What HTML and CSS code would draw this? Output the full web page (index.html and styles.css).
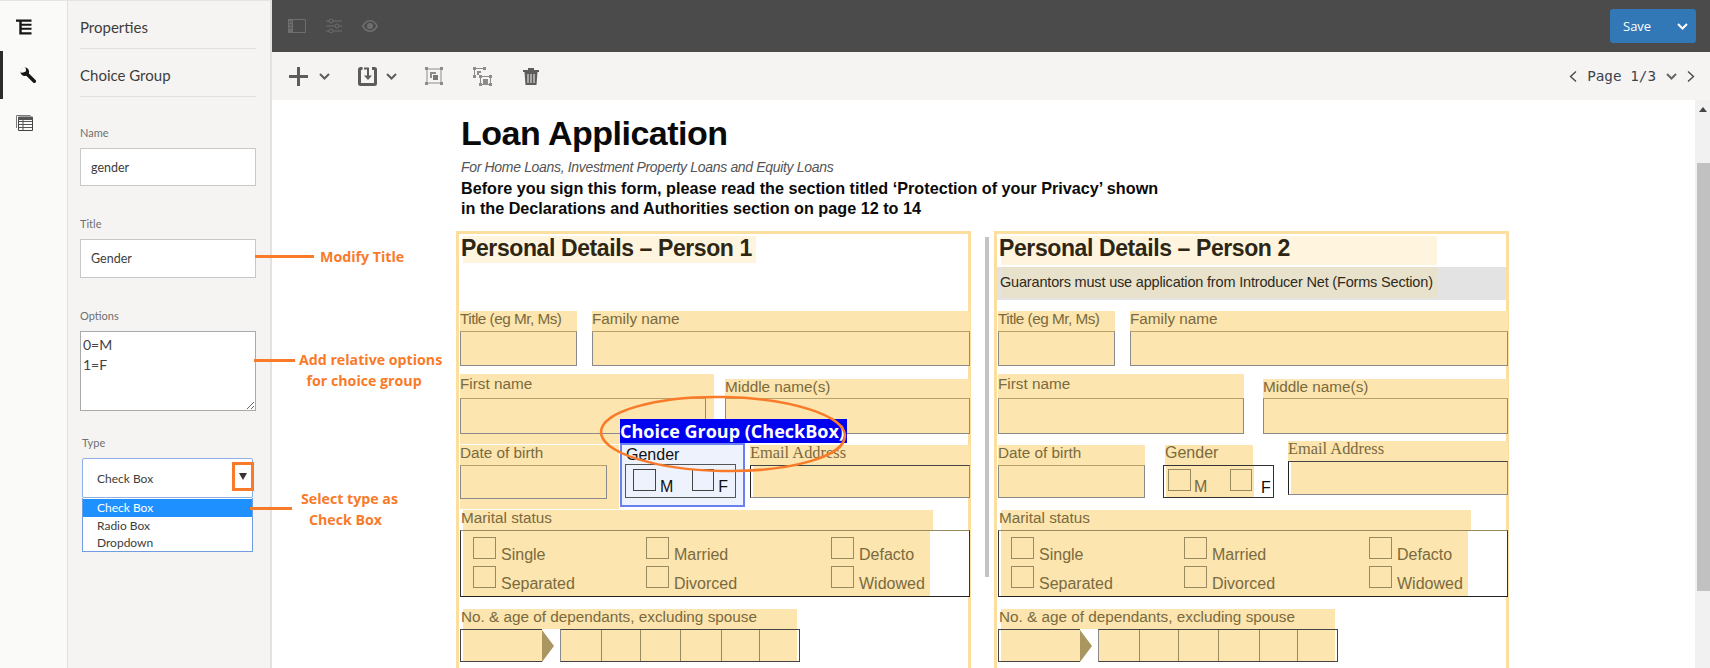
FILE: index.html
```html
<!DOCTYPE html>
<html lang="en">
<head>
<meta charset="utf-8">
<title>Choice Group</title>
<link rel="stylesheet" href="styles.css">
</head>
<body>
<div class="app">
  <nav class="rail">
    <div class="rail-item">
      <svg width="16" height="16" viewBox="0 0 16 16"><path d="M0 .5h15.500v2.200H0zM3.300 .5h2.400v15H3.300zM5.700 4.700h9.800v2H5.700zM5.700 8.800h9.800v2H5.700zM3.300 13.200h12.200v2.200H3.300z" fill="#161616"/></svg>
    </div>
    <div class="rail-item rail-active rail-wrench">
      <svg width="16" height="16" viewBox="0 0 16 16"><path d="M6 6l8.300 8.200" stroke="#161616" stroke-width="3.400" stroke-linecap="round"/><circle cx="4.800" cy="4.800" r="4.300" fill="#161616"/><path d="M-.5 3.800 3.800-.5 6 1.800 5.800 4.500 3.200 5.600 1.400 5.800z" fill="#fafaf9"/></svg>
    </div>
    <div class="rail-item">
      <svg width="17" height="16" viewBox="0 0 17 16"><path d="M.5 13V.5h14" fill="none" stroke="#777"/><path d="M2.500 2.500h14v13h-14z" fill="none" stroke="#444"/><path d="M2.500 2h14v2.500h-14zM3 6.500h13M3 9.500h13M3 12.500h13M7 5v10" fill="#555" stroke="#555"/></svg>
    </div>
  </nav>

  <aside class="panel">
    <div class="panel-head">Properties</div>
    <div class="panel-head">Choice Group</div>
    <div class="prop-form">
      <label class="prop-label">Name</label>
      <div class="input">gender</div>
      <label class="prop-label">Title</label>
      <div class="input input-tall">Gender</div>
      <label class="prop-label">Options</label>
      <div class="textarea">0=M<br>1=F
        <svg class="grip" width="9" height="9" viewBox="0 0 9 9"><path d="M1 8 8 1M5 8 8 5" stroke="#666" fill="none"/></svg>
      </div>
      <label class="prop-label prop-label-type">Type</label>
      <div class="select">
        <div class="select-value">Check Box</div>
        <ul class="select-list">
          <li class="select-on">Check Box</li>
          <li>Radio Box</li>
          <li>Dropdown</li>
        </ul>
      </div>
    </div>
  </aside>

  <main class="main">
    <header class="topbar">
      <div class="icons">
        <svg width="18" height="14" viewBox="0 0 18 14"><path d="M.5.5h17v13H.5z" fill="none" stroke="#6e6e6e"/><path d="M0 0h5v14H0z" fill="#6e6e6e"/><path d="M1 3h3M1 6h3M1 9h3" stroke="#4b4b4b"/></svg>
        <svg width="16" height="14" viewBox="0 0 16 14"><g fill="none" stroke="#6e6e6e"><path d="M0 2h3M7 2h9M0 7h9M13 7h3M0 12h3M7 12h9"/><circle cx="5" cy="2" r="2"/><circle cx="11" cy="7" r="2"/><circle cx="5" cy="12" r="2"/></g></svg>
        <svg width="16" height="12" viewBox="0 0 16 12"><path d="M.8 6C3 2 5.500 .8 8 .8S13 2 15.200 6C13 10 10.500 11.200 8 11.200S3 10 .8 6z" fill="none" stroke="#6e6e6e" stroke-width="1.600"/><circle cx="8" cy="6" r="3" fill="#6e6e6e"/></svg>
      </div>
      <div class="save"><span>Save</span>
        <svg width="11" height="7" viewBox="0 0 11 7"><path d="M1 1l4.500 4.500L10 1" fill="none" stroke="#fff" stroke-width="2"/></svg>
      </div>
    </header>

    <div class="toolbar">
      <div class="tools">
        <span class="tool tool-add">
          <svg width="19" height="19" viewBox="0 0 19 19"><path d="M8 0h3v19H8zM0 8h19v3H0z" fill="#5c5c5c"/></svg>
          <svg width="11" height="7" viewBox="0 0 11 7"><path d="M1 1l4.500 4.500L10 1" fill="none" stroke="#5c5c5c" stroke-width="2"/></svg>
        </span>
        <span class="tool tool-save">
          <svg width="19" height="19" viewBox="0 0 19 19"><path d="M4.500 1.500H2.500a1 1 0 0 0-1 1v14a1 1 0 0 0 1 1h14a1 1 0 0 0 1-1v-14a1 1 0 0 0-1-1H14" fill="none" stroke="#5c5c5c" stroke-width="3"/><path d="M6 1.500h4v7.500" fill="none" stroke="#5c5c5c" stroke-width="2"/><path d="M6 8.500h8l-4 4.500z" fill="#5c5c5c"/></svg>
          <svg width="11" height="7" viewBox="0 0 11 7"><path d="M1 1l4.500 4.500L10 1" fill="none" stroke="#5c5c5c" stroke-width="2"/></svg>
        </span>
        <span class="tool tool-group">
          <svg width="18" height="18" viewBox="0 0 18 18"><path d="M2 2h14v14H2z" fill="none" stroke="#8c8c8c"/><path d="M0 0h3v3H0zM15 0h3v3h-3zM0 15h3v3H0zM15 15h3v3h-3z" fill="#8c8c8c"/><path d="M5 5h6v2H7v4H5z" fill="#8c8c8c"/><path d="M8 8h5v5H8z" fill="#777"/></svg>
        </span>
        <span class="tool tool-ungroup">
          <svg width="19" height="19" viewBox="0 0 19 19"><path d="M1.500 1.500h10M1.500 1.500v8M7.500 9.500h10v8h-10z" fill="none" stroke="#8c8c8c"/><path d="M0 0h3v3H0zM10 0h3v3h-3zM0 8h3v3H0zM6 8h3v3H6zM16 8h3v3h-3zM6 16h3v3H6zM16 16h3v3h-3z" fill="#8c8c8c"/><path d="M10 12h5v5h-5z" fill="#8c8c8c"/><path d="M4 4h4v2H6v2H4z" fill="#8c8c8c"/></svg>
        </span>
        <span class="tool tool-trash">
          <svg width="16" height="18" viewBox="0 0 16 18"><path d="M0 3h16v2H0zM5 1h6v2H5z" fill="#5c5c5c"/><path d="M1.500 5h13l-1 13h-11z" fill="#5c5c5c"/><path d="M5 7v9M8 7v9M11 7v9" stroke="#f5f4f2"/></svg>
        </span>
      </div>
      <div class="pager">
        <svg width="8" height="11" viewBox="0 0 8 11"><path d="M7 .5 1.500 5.500 7 10.500" fill="none" stroke="#444" stroke-width="1.300"/></svg>
        <span class="pager-text">Page 1/3</span>
        <svg width="11" height="7" viewBox="0 0 11 7"><path d="M1 1l4.500 4.500L10 1" fill="none" stroke="#666" stroke-width="2"/></svg>
        <svg width="8" height="11" viewBox="0 0 8 11"><path d="M1 .5 6.500 5.500 1 10.500" fill="none" stroke="#444" stroke-width="1.300"/></svg>
      </div>
    </div>

    <section class="canvas">
      <div class="doc">
        <h1 class="doc-title">Loan Application</h1>
        <p class="doc-sub">For Home Loans, Investment Property Loans and Equity Loans</p>
        <p class="doc-note">Before you sign this form, please read the section titled ‘Protection of your Privacy’ shown<br>in the Declarations and Authorities section on page 12 to 14</p>

        <div class="sheets">
          <div class="sheet">
            <div class="sheet-head"><h2 class="sheet-title sheet-title-1">Personal Details – Person 1</h2></div>
            <div class="sheet-strip"></div>
            <div class="row row-a">
              <div class="fld w-title"><span class="lab lab-title">Title (eg Mr, Ms)</span><div class="box box-a"></div></div>
              <div class="fld w-family"><span class="lab">Family name</span><div class="box box-a"></div></div>
            </div>
            <div class="row row-b row-b1">
              <div class="fld w-first w-first-1"><span class="lab lab-first">First name</span><div class="box box-b"></div></div>
              <div class="fld w-middle"><span class="lab lab-middle">Middle name(s)</span><div class="box box-b"></div></div>
            </div>
            <div class="row row-c">
              <div class="fld w-dob w-dob-1"><span class="lab lab-dob">Date of birth</span><div class="box box-c"></div></div>
              <div class="gender-slot"></div>
              <div class="fld w-email"><span class="lab lab-serif">Email Address</span><div class="box box-c"></div></div>
            </div>
            <div class="row-marital">
              <span class="lab lab-marital">Marital status</span>
              <div class="marital">
                <div class="opt"><i class="cb"></i>Single</div>
                <div class="opt"><i class="cb"></i>Married</div>
                <div class="opt"><i class="cb"></i>Defacto</div>
                <div class="opt"><i class="cb"></i>Separated</div>
                <div class="opt"><i class="cb"></i>Divorced</div>
                <div class="opt"><i class="cb"></i>Widowed</div>
              </div>
            </div>
            <div class="row-dep">
              <span class="lab lab-dep">No. &amp; age of dependants, excluding spouse</span>
              <div class="dep">
                <div class="dep-num"></div><div class="dep-arrow"></div>
                <div class="dep-cells"><i></i><i></i><i></i><i></i><i></i><i></i></div>
              </div>
            </div>
          </div>

          <div class="rule"></div>

          <div class="sheet">
            <div class="sheet-head"><h2 class="sheet-title sheet-title-2">Personal Details – Person 2</h2></div>
            <div class="sheet-strip sheet-strip-on"><span>Guarantors must use application from Introducer Net (Forms Section)</span></div>
            <div class="row row-a">
              <div class="fld w-title"><span class="lab lab-title">Title (eg Mr, Ms)</span><div class="box box-a"></div></div>
              <div class="fld w-family"><span class="lab">Family name</span><div class="box box-a"></div></div>
            </div>
            <div class="row row-b">
              <div class="fld w-first"><span class="lab lab-first">First name</span><div class="box box-b"></div></div>
              <div class="fld w-middle"><span class="lab lab-middle">Middle name(s)</span><div class="box box-b"></div></div>
            </div>
            <div class="row row-c">
              <div class="fld w-dob"><span class="lab lab-dob">Date of birth</span><div class="box box-c"></div></div>
              <div class="fld w-gender"><span class="lab lab-gender">Gender</span>
                <div class="gbox"><div class="gbox-fill"><i class="cb"></i>M<i class="cb cb-2"></i></div><span class="gbox-f">F</span></div>
              </div>
              <div class="fld w-email w-email2"><span class="lab lab-serif">Email Address</span><div class="box box-c"></div></div>
            </div>
            <div class="row-marital">
              <span class="lab lab-marital">Marital status</span>
              <div class="marital">
                <div class="opt"><i class="cb"></i>Single</div>
                <div class="opt"><i class="cb"></i>Married</div>
                <div class="opt"><i class="cb"></i>Defacto</div>
                <div class="opt"><i class="cb"></i>Separated</div>
                <div class="opt"><i class="cb"></i>Divorced</div>
                <div class="opt"><i class="cb"></i>Widowed</div>
              </div>
            </div>
            <div class="row-dep">
              <span class="lab lab-dep">No. &amp; age of dependants, excluding spouse</span>
              <div class="dep">
                <div class="dep-num"></div><div class="dep-arrow"></div>
                <div class="dep-cells"><i></i><i></i><i></i><i></i><i></i><i></i></div>
              </div>
            </div>
          </div>
        </div>
      </div>
      <div class="scrollbar"><span class="scroll-up"></span><span class="scroll-thumb"></span></div>
    </section>
  </main>

  <!-- selected widget on the form -->
  <div class="choice">
    <div class="choice-tag">Choice Group (CheckBox)</div>
    <div class="choice-body">
      <div class="choice-label">Gender</div>
      <div class="choice-box"><i class="cb cb-k"></i>M<i class="cb cb-k cb-3"></i>F</div>
    </div>
  </div>

  <!-- annotations -->
  <div class="arrow-box"><span class="tri"></span></div>
  <span class="line l1"></span><span class="note n1">Modify Title</span>
  <span class="line l2"></span><span class="note n2">Add relative options<br><span class="note-off-a">for choice group</span></span>
  <span class="line l3"></span><span class="note n3">Select type as<br><span class="note-off-b">Check Box</span></span>
  <svg class="ellipse" width="252" height="82" viewBox="0 0 252 82"><ellipse cx="126" cy="41" rx="122" ry="37" transform="rotate(1 126 41)" fill="none" stroke="#f97b2a" stroke-width="2.500"/></svg>
</div>
</body>
</html>
```
FILE: styles.css
```css
* { box-sizing: border-box; }
html, body { margin: 0; padding: 0; height: 100%; overflow: hidden; }
body { font-family: "Lato", "Liberation Sans", sans-serif; color: #2c2c2c; background: #fff; }
.app { position: relative; display: flex; width: 1710px; height: 668px; overflow: hidden; }

/* rail */
.rail { width: 68px; flex: none; background: #fafaf9; border-right: 1px solid #dfdfdf; border-top: 1px solid #e4e4e4; padding-top: 2px; }
.rail-item { height: 48px; display: flex; align-items: center; padding-left: 16px; }
.rail-wrench { padding-left: 20px; }
.rail-active { box-shadow: inset 3px 0 0 #2c2c2c; }

/* properties panel */
.panel { width: 204px; flex: none; background: #f5f4f2; border-right: 2px solid #e2e2e2; border-top: 1px solid #e4e4e4; padding: 0 14px 0 12px; }
.panel-head { height: 48px; line-height: 52px; border-bottom: 1px solid #e0e0e0; font-size: 15px; color: #3d3d3d; white-space: nowrap; }
.prop-form { padding-top: 27px; }
.prop-label { display: block; font-size: 11px; line-height: 18px; height: 24px; color: #707070; }
.prop-label-type { margin-left: 2px; }
.input { height: 38px; margin-bottom: 29px; background: #fff; border: 1px solid #c8c8c8; padding-left: 10px; font-size: 12.500px; line-height: 37px; color: #3d3d3d; }
.input-tall { height: 39px; }
.textarea { position: relative; height: 80px; margin-bottom: 23px; background: #fff; border: 1px solid #aaa; padding: 3px 0 0 2px; font-size: 14px; line-height: 20px; color: #444; }
.grip { position: absolute; right: 0; bottom: 0; }
.select { margin: 0 3px 0 2px; }
.select-value { height: 40px; background: #fff; border: 1px solid #8fb0e6; border-radius: 2px; padding-left: 14px; font-size: 12px; line-height: 40px; color: #3d3d3d; }
.select-list { list-style: none; margin: 0; padding: 1px 0 0; border: 1px solid #6f9de0; border-top: 0; background: #fff; font-size: 12px; color: #3d3d3d; }
.select-list li { height: 17px; line-height: 17px; padding-left: 14px; }
.select-list .select-on { height: 18px; background: #1e90ff; color: #fff; }

/* main */
.main { flex: 1; min-width: 0; display: flex; flex-direction: column; }
.topbar { height: 52px; flex: none; background: #4b4b4b; display: flex; align-items: center; justify-content: space-between; padding: 0 14px 0 16px; }
.icons { display: flex; align-items: center; gap: 20px; }
.save { width: 86px; height: 34px; background: #3277b6; border-radius: 3px; color: #fff; font-size: 13px; display: flex; align-items: center; justify-content: space-between; padding: 0 8px 0 13px; font-family: "Open Sans", sans-serif; }
.toolbar { height: 48px; flex: none; background: #f5f4f2; display: flex; align-items: center; justify-content: space-between; padding: 0 15px 0 17px; }
.tools { display: flex; align-items: center; }
.tool { display: flex; align-items: center; }
.tool-add { gap: 11px; }
.tool-save { gap: 9px; margin-left: 28px; }
.tool-group { margin-left: 28px; }
.tool-ungroup { margin-left: 30px; }
.tool-trash { margin-left: 31px; }
.pager { display: flex; align-items: center; gap: 10px; font-family: "DejaVu Sans Mono", monospace; font-size: 14.300px; color: #3d4450; }

/* canvas */
.canvas { flex: 1; min-height: 0; display: flex; background: #fff; overflow: hidden; }
.doc { flex: 1; min-width: 0; padding: 13px 0 0 184px; font-family: "Liberation Sans", Arial, sans-serif; }
.doc-title { margin: 0 0 0 5px; font-size: 34px; line-height: 40px; font-weight: 700; color: #0a0a0a; letter-spacing: -.5px; }
.doc-sub { margin: 5px 0 0 5px; font-size: 14px; line-height: 18px; font-style: italic; color: #555; letter-spacing: -.33px; }
.doc-note { margin: 2px 0 0 5px; font-size: 16.200px; line-height: 20px; font-weight: 700; color: #0a0a0a; }
.sheets { display: flex; margin-top: 13px; }
.rule { width: 4px; margin: 6px 5px 0 14px; background: #c4c4c4; flex: none; height: 340px; }
.sheet { width: 515px; flex: none; border: 3px solid #fcdf9e; border-bottom: 0; height: 440px; }

.sheet-head { height: 31px; }
.sheet-title { margin: 2px 0 0 4px; font-size: 23px; letter-spacing: -.4px; line-height: 24px; height: 27px; font-weight: 700; color: #2e2614; background: #fff5df; white-space: nowrap; text-indent: -2px; }
.sheet-title-1 { width: 293px; }
.sheet-title-2 { width: 436px; height: 29px; }
.sheet-strip { height: 44px; }
.sheet-strip-on { background: #e3e3e3; height: 33px; margin-bottom: 11px; font-size: 14.500px; line-height: 31px; letter-spacing: -.18px; color: #2e2a1c; white-space: nowrap; }
.sheet-strip-on span { display: block; width: 436px; margin-left: 4px; height: 31px; background: #e8e2cd; text-indent: -1px; }

.row { display: flex; width: 510px; }
.fld { display: flex; flex-direction: column; flex: none; }
.lab { display: block; background: #fce5ae; color: #7a6a3f; font-size: 15.300px; line-height: 15px; height: 20px; white-space: nowrap; }
.lab-serif { font-family: "Liberation Serif", serif; font-size: 16.400px; }
.box { border: 1px solid #333; border-color: #b9a26a #8a8a8a #8a8a8a #8a8a8a; background: #fce5ae; }
.row-a { margin-left: 1px; gap: 15px; }
.lab-title { letter-spacing: -.5px; }
.w-title { width: 117px; }
.w-family { width: 378px; }
.box-a { height: 35px; }
.row-b { margin-left: 1px; margin-top: 8px; gap: 19px; height: 60px; }
.row-b1 { gap: 11px; }
.w-first { width: 246px; }
.w-first-1 { width: 254px; height: 70px; background: #fce5ae; }
.w-first-1 .box-b { width: 246px; }
.w-middle { width: 245px; }
.lab-first { height: 24px; line-height: 19px; }
.lab-middle { margin-top: 5px; height: 19px; line-height: 16px; }
.box-b { height: 36px; }
.row-c { margin-left: 1px; margin-top: 11px; height: 53px; }
.w-dob { width: 147px; }
.w-dob-1 { width: 159px; height: 64px; background: #fce5ae; }
.w-dob-1 .box-c { width: 147px; }
.box-c { height: 34px; }
.lab-dob { height: 20px; line-height: 15px; }
.gender-slot { width: 131px; flex: none; }
.w-email { width: 220px; }
.w-email .lab { height: 20px; line-height: 15px; }
.w-email .box-c { border-left-color: #222; border-top-color: #444; background: linear-gradient(90deg, #fff 2px, #fce5ae 2px); }
.w-gender { width: 111px; margin-left: 18px; }
.lab-gender { width: 88px; height: 20px; margin-left: 2px; font-size: 16px; }
.w-email2 { margin-left: 14px; margin-top: -4px; }

.gbox { height: 34px; border: 1px solid #333; background: #fff; display: flex; font-size: 16px; }
.gbox-fill { width: 88px; margin-left: 2px; background: #fce5ae; color: #7a6a3f; display: flex; align-items: flex-end; padding: 0 0 1px 2px; flex: none; }
.gbox-f { color: #111; align-self: flex-end; padding: 0 0 0 7px; font-family: "Liberation Sans", sans-serif; font-size: 16px; }

.cb { display: inline-block; width: 23px; height: 22px; border: 1px solid #9a8a60; margin-right: 3px; margin-bottom: 5px; flex: none; }
.cb-2 { margin-left: 23px; margin-right: 0; width: 22px; }
.cb-3 { margin-left: 19px; width: 22px; }
.cb-k { border-color: #444; }

.row-marital { margin: 12px 0 0 1px; width: 510px; }
.lab-marital { width: 470px; margin-left: 3px; height: 20px; text-indent: -2px; }
.marital { display: grid; grid-template-columns: 173px 185px 1fr; grid-auto-rows: 29px; width: 510px; height: 67px; border: 1px solid #333; border-color: #9a8a60 #333 #222 #333; padding: 6px 0 0 12px; background: linear-gradient(90deg, #fff 2px, #fce5ae 2px, #fce5ae 469px, #fff 469px); font-size: 16px; color: #7a6a3f; }
.opt { display: flex; align-items: flex-end; line-height: 22px; }
.opt .cb { margin-right: 5px; margin-bottom: 5px; align-self: flex-start; }

.row-dep { margin: 12px 0 0 1px; }
.lab-dep { width: 334px; margin-left: 3px; height: 20px; text-indent: -2px; }
.dep { display: flex; align-items: stretch; height: 33px; }
.dep-num { width: 82px; border: 1px solid #444; border-right: 0; background: linear-gradient(90deg, #fff 2px, #fce5ae 2px); }
.dep-arrow { width: 0; height: 0; align-self: center; border-left: 12px solid #a99660; border-top: 16px solid transparent; border-bottom: 16px solid transparent; }
.dep-cells { display: grid; grid-template-columns: 40px 39px 40px 41px 38px 42px; margin-left: 6px; width: 240px; border: 1px solid #444; border-left-color: #8a8a8a; background: linear-gradient(90deg, #fce5ae 236px, #fff 236px); }
.dep-cells i { border-left: 1px solid #9a8a60; }
.dep-cells i:first-child { border-left: 0; }

.scrollbar { width: 15px; flex: none; background: #f1f1f1; position: relative; }
.scroll-up { position: absolute; top: 7px; left: 4px; border: 4px solid transparent; border-top: 0; border-bottom: 5px solid #444; }
.scroll-thumb { position: absolute; top: 63px; left: 2px; right: 0; height: 428px; background: #c1c1c1; }

/* selected choice-group widget (sits on top of the form) */
.choice { position: absolute; left: 620px; top: 419px; width: 227px; font-family: "Liberation Sans", sans-serif; }
.choice-tag { height: 24px; background: #0000f0; color: #fff; font-family: "Open Sans", sans-serif; font-weight: 700; font-size: 18px; line-height: 24px; white-space: nowrap; overflow: hidden; }
.choice-body { width: 125px; height: 64px; background: #eef2fc; border: 2px solid #6a7ff0; padding: 0 0 0 3px; }
.choice-label { font-size: 16px; line-height: 19px; color: #111; padding-left: 1px; }
.choice-box { display: flex; align-items: flex-end; width: 111px; height: 34px; border: 1px solid #555; padding: 0 0 1px 7px; font-size: 16px; color: #111; }
.choice-box .cb { margin-bottom: 5px; margin-right: 4px; }

/* annotations */
.arrow-box { position: absolute; left: 232px; top: 462px; width: 22px; height: 29px; border: 3px solid #f97b2a; display: flex; align-items: center; justify-content: center; }
.tri { border: 4px solid transparent; border-top: 7px solid #333; border-bottom: 0; }
.line { position: absolute; height: 3px; background: #f97b2a; }
.l1 { left: 255px; top: 255px; width: 59px; }
.l2 { left: 254px; top: 359px; width: 41px; }
.l3 { left: 250px; top: 507px; width: 42px; }
.note { position: absolute; color: #f97b2a; font-family: "Open Sans", sans-serif; font-weight: 700; font-size: 14.200px; line-height: 21px; text-align: center; white-space: nowrap; }
.note-off-a { display: inline-block; margin-right: 13px; }
.note-off-b { display: inline-block; margin-right: 8px; }
.n1 { left: 320px; top: 246px; }
.n2 { left: 299px; top: 349px; }
.n3 { left: 301px; top: 488px; }
.ellipse { position: absolute; left: 597px; top: 393px; }
```
